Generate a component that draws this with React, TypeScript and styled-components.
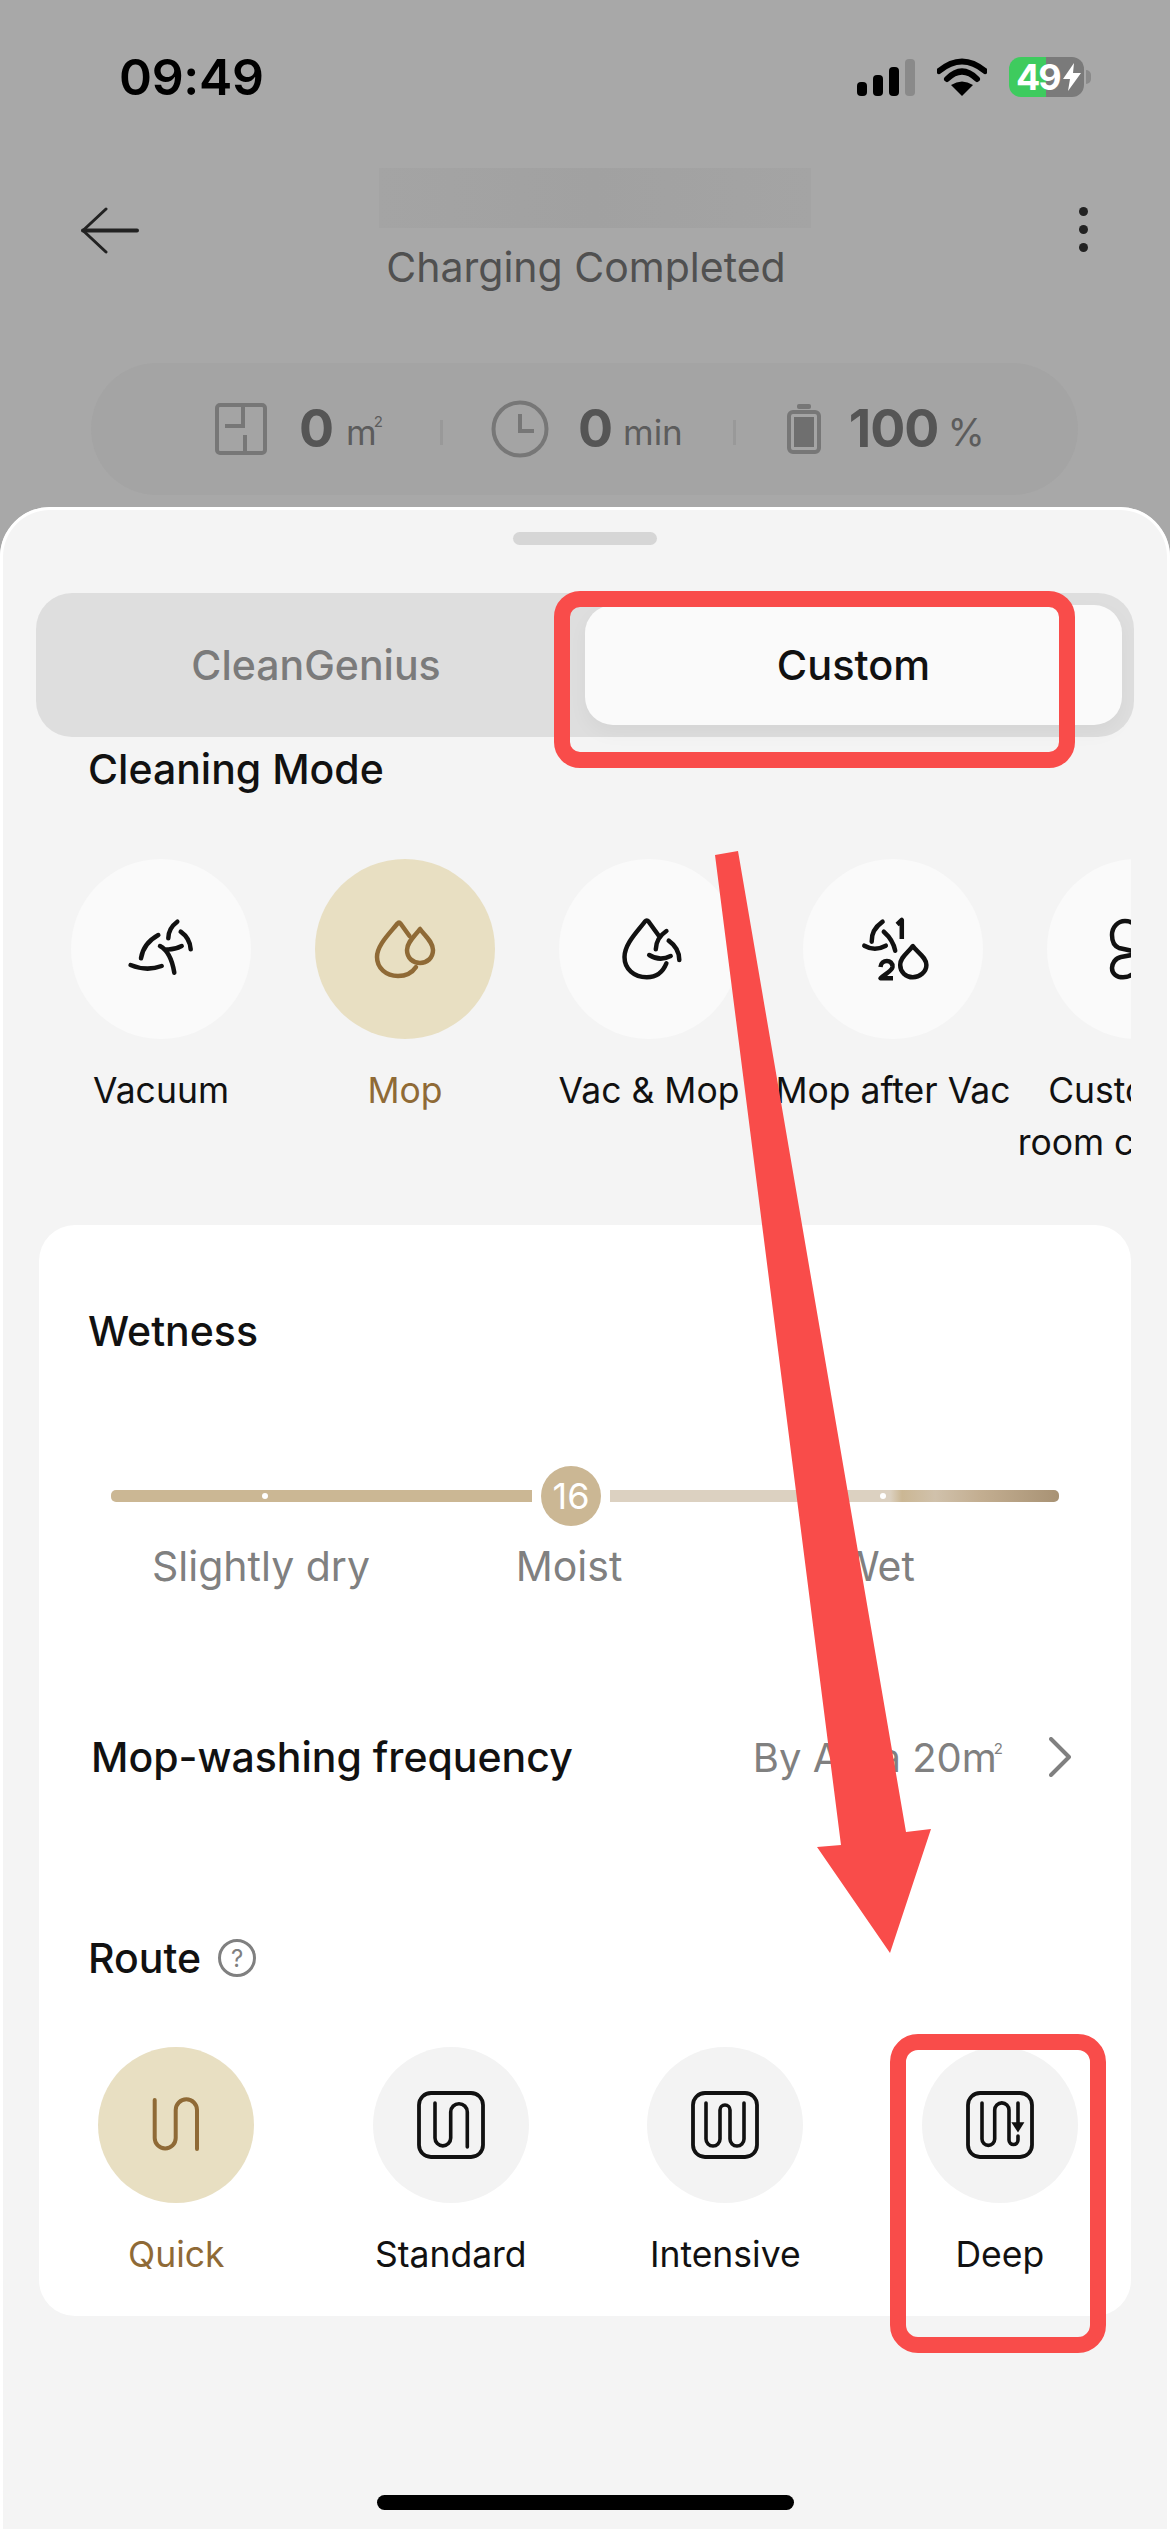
import React from "react";
import styled, { createGlobalStyle } from "styled-components";

const Global = createGlobalStyle`
  html, body { margin: 0; padding: 0; background: #a8a8a8; }
  * { box-sizing: border-box; }
  body { font-family: Inter, "Liberation Sans", sans-serif; }
`;

const RED = "#f94c4a";
const BROWN = "#8f6a36";
const SEL = "#e8dfc2";

const Page = styled.div`
  position: relative;
  width: 1170px;
  height: 2532px;
  overflow: hidden;
  display: flex;
  flex-direction: column;
  background: #a8a8a8;
`;

const StatusBar = styled.div`
  height: 154px;
  flex: none;
  display: flex;
  align-items: center;
  justify-content: space-between;
  padding: 0 79px 0 119px;
`;
const Time = styled.div`
  font-size: 50px;
  font-weight: 600;
  color: #000;
  letter-spacing: -0.3px;
`;
const StatusIcons = styled.div`
  display: flex;
  align-items: center;
  gap: 22px;
`;
const Signal = styled.div`
  display: flex;
  align-items: flex-end;
  gap: 6px;
  height: 37px;
`;
const SignalBar = styled.div<{ $h: number; $off?: boolean }>`
  width: 10px;
  height: ${(p) => p.$h}px;
  border-radius: 4px;
  background: ${(p) => (p.$off ? "#8a8a8a" : "#000")};
`;
const BatteryWrap = styled.div`
  display: flex;
  align-items: center;
  gap: 2px;
`;
const Battery = styled.div`
  width: 75px;
  height: 40px;
  border-radius: 12px;
  background: linear-gradient(90deg, #3ecb5e 0 37px, #7a7a7a 37px 100%);
  color: #fff;
  font-size: 36px;
  font-weight: 700;
  letter-spacing: -2px;
  display: flex;
  align-items: center;
  padding-left: 7px;
  gap: 3px;
`;
const BatteryNub = styled.div`
  width: 5px;
  height: 14px;
  border-radius: 0 6px 6px 0;
  background: #8a8a8a;
`;

const Header = styled.div`
  flex: none;
  height: 152px;
  padding: 14px 0 0 81px;
  display: grid;
  grid-template-columns: 298px 432px 1fr;
`;
const BackIcon = styled.svg`
  margin-top: 39px;
  display: block;
`;
const TitleCol = styled.div`
  display: flex;
  flex-direction: column;
  align-items: center;
`;
const BlurTitle = styled.div`
  width: 432px;
  height: 60px;
  flex: none;
  background: linear-gradient(90deg, #a4a4a4, #a1a1a1 50%, #a4a4a4);
`;
const Subtitle = styled.div`
  white-space: nowrap;
  font-size: 41px;
  line-height: 78px;
  color: #505050;
  margin-right: 18px;
`;
const Dots = styled.div`
  margin: 39px 0 0 268px;
  display: flex;
  flex-direction: column;
  gap: 9px;
  width: 9px;
`;
const Dot = styled.div`
  width: 9px;
  height: 9px;
  border-radius: 50%;
  background: #222;
`;

const StatsPill = styled.div`
  flex: none;
  margin: 57px 0 0 91px;
  width: 987px;
  height: 132px;
  border-radius: 66px;
  background: #a4a4a4;
  display: flex;
  align-items: center;
  padding-left: 124px;
`;
const StatIcon = styled.svg`
  display: block;
  flex: none;
`;
const StatValue = styled.span<{ $ml: number }>`
  margin-left: ${(p) => p.$ml}px;
  margin-top: -2px;
  font-size: 52px;
  font-weight: 700;
  color: #555;
  letter-spacing: -1px;
`;
const StatUnit = styled.span<{ $ml: number; $size?: number }>`
  margin-left: ${(p) => p.$ml}px;
  margin-top: 6px;
  font-size: ${(p) => p.$size ?? 35}px;
  color: #5c5c5c;
`;
const Sup = styled.sup`
  font-size: 15px;
  vertical-align: 18px;
  line-height: 0;
  margin-left: -3px;
`;
const StatDivider = styled.div<{ $ml: number; $mr: number }>`
  width: 3px;
  height: 25px;
  margin: 6px ${(p) => p.$mr}px 0 ${(p) => p.$ml}px;
  background: #999;
  flex: none;
`;

const Sheet = styled.div`
  flex: 1;
  margin-top: 12px;
  display: flex;
  flex-direction: column;
  background: #f4f4f4;
  border-radius: 50px 50px 0 0;
  box-shadow: inset 0 0 0 3px #fff;
`;
const Handle = styled.div`
  width: 144px;
  height: 13px;
  margin: 25px auto 0;
  border-radius: 7px;
  background: #d6d6d6;
`;
const Segmented = styled.div`
  margin: 48px 36px 0;
  height: 144px;
  padding: 12px 12px 12px 0;
  border-radius: 36px;
  background: #dedede;
  display: grid;
  grid-template-columns: 549px 537px;
`;
const Segment = styled.div<{ $active?: boolean }>`
  display: flex;
  align-items: center;
  justify-content: center;
  font-size: ${(p) => (p.$active ? 41.5 : 41)}px;
  font-weight: 500;
  color: ${(p) => (p.$active ? "#111" : "#7b7b7b")};
  padding-left: ${(p) => (p.$active ? 0 : 11)}px;
  border-radius: 28px;
  background: ${(p) => (p.$active ? "#fafafa" : "transparent")};
  box-shadow: ${(p) => (p.$active ? "0 8px 20px rgba(0,0,0,.04)" : "none")};
`;
const SectionTitle = styled.div<{ $ml?: number }>`
  margin-left: ${(p) => p.$ml ?? 0}px;
  font-size: 41px;
  line-height: 48px;
  font-weight: 500;
  color: #111;
`;
const ModeTitle = styled(SectionTitle)`
  margin-top: 8px;
`;
const ModeStrip = styled.div`
  margin: 66px 39px 0;
  height: 309px;
  display: flex;
  overflow: hidden;
  flex: none;
`;
const ModeItem = styled.div`
  flex: 0 0 244px;
  display: flex;
  flex-direction: column;
  align-items: center;
`;
const ModeCircle = styled.div<{ $active?: boolean }>`
  width: 180px;
  height: 180px;
  flex: none;
  border-radius: 50%;
  background: ${(p) => (p.$active ? SEL : "#fafafa")};
  color: ${(p) => (p.$active ? BROWN : "#111")};
`;
const ItemLabel = styled.div<{ $active?: boolean; $top: number }>`
  margin-top: ${(p) => p.$top}px;
  font-size: 35.5px;
  line-height: 52px;
  text-align: center;
  color: ${(p) => (p.$active ? BROWN : "#111")};
`;
const CircleSvg = styled.svg`
  display: block;
  width: 100%;
  height: 100%;
`;

const Card = styled.div`
  flex: none;
  margin: 57px 39px 0;
  height: 1091px;
  padding-top: 82px;
  border-radius: 36px;
  background: #fff;
`;
const SliderRow = styled.div`
  margin: 111px 0 0 72px;
  width: 948px;
  height: 60px;
  display: flex;
  align-items: center;
`;
const Bar = styled.div<{ $w: number }>`
  position: relative;
  flex: 0 0 ${(p) => p.$w}px;
  height: 12px;
`;
const FilledBar = styled(Bar)`
  background: #cbb794;
  border-radius: 5px 0 0 5px;
`;
const RestBar = styled(Bar)`
  border-radius: 0 5px 5px 0;
  background: linear-gradient(
    90deg,
    #dcd1c1 0,
    #dcd1c1 280px,
    #cbb794 292px,
    #d0c1ab 325px,
    #c3ae91 370px,
    #a89274 100%
  );
`;
const Tick = styled.div<{ $x: number }>`
  position: absolute;
  left: ${(p) => p.$x}px;
  top: 3px;
  width: 6px;
  height: 6px;
  border-radius: 50%;
  background: #fff;
`;
const Thumb = styled.div`
  flex: 0 0 60px;
  height: 60px;
  margin: 0 9px;
  border-radius: 50%;
  background: #cbb794;
  color: #fff;
  font-size: 36px;
  display: flex;
  align-items: center;
  justify-content: center;
`;
const SliderLabels = styled.div`
  margin: 14px 0 0 68px;
  display: grid;
  grid-template-columns: repeat(3, 308px);
`;
const SliderLabel = styled.div`
  font-size: 41px;
  line-height: 52px;
  text-align: center;
  color: #808080;
`;
const FreqRow = styled.div`
  margin: 135px 60px 0 52px;
  height: 60px;
  display: flex;
  align-items: center;
  justify-content: space-between;
`;
const FreqLabel = styled.div`
  font-size: 41px;
  font-weight: 500;
  color: #111;
`;
const FreqValue = styled.div`
  display: flex;
  align-items: center;
  gap: 46px;
  font-size: 40px;
  color: #808080;
`;
const RouteHead = styled.div`
  margin: 147px 0 0 49px;
  display: flex;
  align-items: center;
  gap: 17px;
`;
const HelpIcon = styled.div`
  width: 38px;
  height: 38px;
  border-radius: 50%;
  border: 3px solid #808080;
  color: #808080;
  font-size: 24px;
  display: flex;
  align-items: center;
  justify-content: center;
`;
const RouteGrid = styled.div`
  margin-top: 65px;
  display: grid;
  grid-template-columns: repeat(4, 274.5px);
`;
const RouteItem = styled.div`
  display: flex;
  flex-direction: column;
  align-items: center;
`;
const RouteCircle = styled.div<{ $active?: boolean }>`
  width: 156px;
  height: 156px;
  border-radius: 50%;
  background: ${(p) => (p.$active ? SEL : "#f3f3f3")};
  color: ${(p) => (p.$active ? BROWN : "#111")};
`;
const HomeBar = styled.div`
  flex: none;
  width: 417px;
  height: 15px;
  margin: 179px auto 0;
  border-radius: 8px;
  background: #000;
`;

const Frame = styled.div<{ $x: number; $y: number; $w: number; $h: number; $r: number }>`
  position: absolute;
  left: ${(p) => p.$x}px;
  top: ${(p) => p.$y}px;
  width: ${(p) => p.$w}px;
  height: ${(p) => p.$h}px;
  border: 16px solid ${RED};
  border-radius: ${(p) => p.$r}px;
`;
const ArrowSvg = styled.svg`
  position: absolute;
  left: 0;
  top: 0;
  pointer-events: none;
`;

const sw = { fill: "none", stroke: "currentColor", strokeLinecap: "round", strokeLinejoin: "round" } as const;

const VacuumIcon = () => (
  <CircleSvg viewBox="0 0 180 180">
    <g {...sw} strokeWidth={4.5}>
      <path d="M59.6 106Q75.6 112.7 90.7 107" />
      <path d="M70 99.3Q72.3 84.3 87.3 76" />
      <path d="M97.3 79.3Q97.3 69.3 106.3 62.7" />
      <path d="M109.7 72.7Q119 79.3 119.7 90.3" />
      <path d="M89 87Q100 93 103.3 113.7" />
      <path d="M95.7 90.5Q103 91 110.7 87" />
    </g>
  </CircleSvg>
);
const MopIcon = () => (
  <CircleSvg viewBox="0 0 180 180">
    <g {...sw} strokeWidth={4.5}>
      <path d="M94.5 77L85.5 64.5Q84 62.5 82.5 64.5C75 74 62 86 62 98C62 109 71 117 83 117C90 117 97 114 101 108" />
      <path d="M105 70C100 77 92 83 92 91C92 99 98 104 105 104C112 104 118 99 118 91C118 83 110 77 105 70Z" />
    </g>
  </CircleSvg>
);
const VacMopIcon = () => (
  <CircleSvg viewBox="0 0 180 180">
    <g {...sw} strokeWidth={4.5}>
      <path d="M100 77L89.5 62.5Q87.8 60.5 86 62.5C78 73 65.5 85 65.5 98C65.5 110 75 118.3 87.8 118.3C97 118.3 104 113 107.4 104.3" />
      <path d="M107.4 72Q97 79 96.8 90.3" />
      <path d="M90.2 96Q100.7 102.7 111.7 97" />
      <path d="M109.7 81.7Q120.3 89.3 120.3 101" />
    </g>
  </CircleSvg>
);
const MopAfterIcon = () => (
  <CircleSvg viewBox="0 0 180 180">
    <g {...sw} strokeWidth={4.5}>
      <path d="M79.6 62.7Q68 71 68.7 82.7" />
      <path d="M61.3 86.7Q71.8 92.7 82.8 86.7" />
      <path d="M80.8 72.7Q90.2 81 92.2 91.7" />
      <path d="M94.1 65.5L98.8 61V80" strokeLinecap="butt" />
      <path d="M77.5 108C78 100 90 100 89.5 108C89 112 82 115 77.5 119.3H90" strokeLinecap="butt" />
      <path d="M109.8 87C105 94 97.2 98 97.2 106C97.2 113 103 118.3 109.8 118.3C116.6 118.3 123.4 113 123.4 106C123.4 98 114.6 94 109.8 87Z" />
    </g>
  </CircleSvg>
);
const RoomIcon = () => (
  <CircleSvg viewBox="0 0 180 180">
    <g {...sw} strokeWidth={4.5}>
      <path d="M90 93L72 89C67 87 65 82 65 76C65 68 71 62 78 62C83 62 87 64 90 68" />
      <path d="M90 95L74 98C68 99 65 105 65 109C65 115 70 118.3 76 118.3C82 118.3 87 115 90 110" />
    </g>
  </CircleSvg>
);

const RouteSvg: React.FC<{ d: string; boxed?: boolean; extra?: React.ReactNode }> = ({ d, boxed = true, extra }) => (
  <CircleSvg viewBox="0 0 156 156">
    <g {...sw} strokeWidth={boxed ? 3.6 : 4}>
      {boxed && <rect x="46" y="46" width="64" height="64" rx="12" strokeWidth={3.8} />}
      <path d={d} />
    </g>
    {extra}
  </CircleSvg>
);

const modes = [
  { label: "Vacuum", Icon: VacuumIcon },
  { label: "Mop", Icon: MopIcon, active: true },
  { label: "Vac & Mop", Icon: VacMopIcon },
  { label: "Mop after Vac", Icon: MopAfterIcon },
  { label: "Customize room cleaning", Icon: RoomIcon },
];

const routes = [
  { label: "Quick", active: true, boxed: false, d: "M56.7 53V91A10.5 10.5 0 0 0 77.7 91V63A10.65 10.65 0 0 1 99 63V102" },
  { label: "Standard", d: "M62 56V91A7.85 7.85 0 0 0 77.7 91V65A8.3 8.3 0 0 1 94.3 65V100" },
  { label: "Intensive", d: "M59 56V92A7 7 0 0 0 73 92V63A5 5 0 0 1 83 63V92A7 7 0 0 0 97 92V56" },
  {
    label: "Deep",
    d: "M60 56V92A6.35 6.35 0 0 0 72.7 92V63A7.15 7.15 0 0 1 87 63V93A4.5 4.5 0 0 0 96 93V89M96 56V76",
    extra: <polygon points="89.3,75.3 102.4,75.3 96,85.5" fill="#111" />,
  },
];

export default function App() {
  return (
    <Page>
      <Global />
      <StatusBar>
        <Time>09:49</Time>
        <StatusIcons>
          <Signal>
            <SignalBar $h={14} />
            <SignalBar $h={21} />
            <SignalBar $h={29} />
            <SignalBar $h={37} $off />
          </Signal>
          <svg width="50" height="38" viewBox="0 0 50 38">
            <path d="M2 13Q25 -6 48 13" fill="none" stroke="#000" strokeWidth="6" strokeLinecap="round" />
            <path d="M10 21Q25 6 40 21" fill="none" stroke="#000" strokeWidth="6" strokeLinecap="round" />
            <path d="M25 38L14 27Q25 20 36 27Z" fill="#000" />
          </svg>
          <BatteryWrap>
            <Battery>
              <span>49</span>
              <svg width="18" height="28" viewBox="0 0 18 28">
                <path d="M11 0L0 16H7L5 28L18 10H10Z" fill="#fff" />
              </svg>
            </Battery>
            <BatteryNub />
          </BatteryWrap>
        </StatusIcons>
      </StatusBar>

      <Header>
        <BackIcon width="58" height="47" viewBox="0 0 58 47" fill="none" stroke="#222" strokeWidth="4" strokeLinecap="round" strokeLinejoin="round">
          <path d="M25 2L2 23.5L25 45" strokeWidth="3" />
          <path d="M2 23.5H56" />
        </BackIcon>
        <TitleCol>
          <BlurTitle />
          <Subtitle>Charging Completed</Subtitle>
        </TitleCol>
        <Dots>
          <Dot />
          <Dot />
          <Dot />
        </Dots>
      </Header>

      <StatsPill>
        <StatIcon width="52" height="52" viewBox="0 0 52 52" fill="none" stroke="#777" strokeWidth="4">
          <rect x="2" y="2" width="48" height="48" rx="3" />
          <path d="M28 2V23H10" />
          <path d="M30 32V50" />
        </StatIcon>
        <StatValue $ml={32}>0</StatValue>
        <StatUnit $ml={13}>
          m<Sup>2</Sup>
        </StatUnit>
        <StatDivider $ml={57} $mr={48} />
        <StatIcon width="58" height="58" viewBox="0 0 58 58" fill="none" stroke="#777" strokeWidth="4">
          <circle cx="29" cy="29" r="26.5" />
          <path d="M29 14V31H43" />
        </StatIcon>
        <StatValue $ml={29}>0</StatValue>
        <StatUnit $ml={11}>min</StatUnit>
        <StatDivider $ml={50} $mr={51} />
        <StatIcon width="34" height="50" viewBox="0 0 34 50">
          <rect x="10" y="0" width="14" height="5" rx="2" fill="#777" />
          <rect x="2" y="8" width="30" height="40" rx="4" fill="none" stroke="#777" strokeWidth="4" />
          <rect x="7" y="13" width="20" height="30" fill="#6f6f6f" />
        </StatIcon>
        <StatValue $ml={28}>100</StatValue>
        <StatUnit $ml={9} $size={38}>%</StatUnit>
      </StatsPill>

      <Sheet>
        <Handle />
        <Segmented>
          <Segment>CleanGenius</Segment>
          <Segment $active>Custom</Segment>
        </Segmented>
        <ModeTitle $ml={88}>Cleaning Mode</ModeTitle>
        <ModeStrip>
          {modes.map(({ label, Icon, active }) => (
            <ModeItem key={label}>
              <ModeCircle $active={active}>
                <Icon />
              </ModeCircle>
              <ItemLabel $active={active} $top={26}>
                {label}
              </ItemLabel>
            </ModeItem>
          ))}
        </ModeStrip>

        <Card>
          <SectionTitle $ml={49}>Wetness</SectionTitle>
          <SliderRow>
            <FilledBar $w={421}>
              <Tick $x={151} />
            </FilledBar>
            <Thumb>16</Thumb>
            <RestBar $w={449}>
              <Tick $x={270} />
            </RestBar>
          </SliderRow>
          <SliderLabels>
            <SliderLabel>Slightly dry</SliderLabel>
            <SliderLabel>Moist</SliderLabel>
            <SliderLabel>Wet</SliderLabel>
          </SliderLabels>
          <FreqRow>
            <FreqLabel>Mop-washing frequency</FreqLabel>
            <FreqValue>
              <span>
                By Area 20m<Sup>2</Sup>
              </span>
              <svg width="22" height="40" viewBox="0 0 22 40" fill="none" stroke="#808080" strokeWidth="4" strokeLinecap="round" strokeLinejoin="round">
                <path d="M2 2L20 20L2 38" />
              </svg>
            </FreqValue>
          </FreqRow>
          <RouteHead>
            <SectionTitle>Route</SectionTitle>
            <HelpIcon>?</HelpIcon>
          </RouteHead>
          <RouteGrid>
            {routes.map((r) => (
              <RouteItem key={r.label}>
                <RouteCircle $active={r.active}>
                  <RouteSvg d={r.d} boxed={r.boxed} extra={r.extra} />
                </RouteCircle>
                <ItemLabel $active={r.active} $top={26}>
                  {r.label}
                </ItemLabel>
              </RouteItem>
            ))}
          </RouteGrid>
        </Card>
        <HomeBar />
      </Sheet>

      <Frame $x={554} $y={591} $w={521} $h={177} $r={26} />
      <Frame $x={890} $y={2034} $w={216} $h={319} $r={28} />
      <ArrowSvg width="1170" height="2532" viewBox="0 0 1170 2532">
        <polygon points="715,855 738,851 906,1832 931,1829 890,1953 817,1847 841,1845" fill={RED} />
      </ArrowSvg>
    </Page>
  );
}
